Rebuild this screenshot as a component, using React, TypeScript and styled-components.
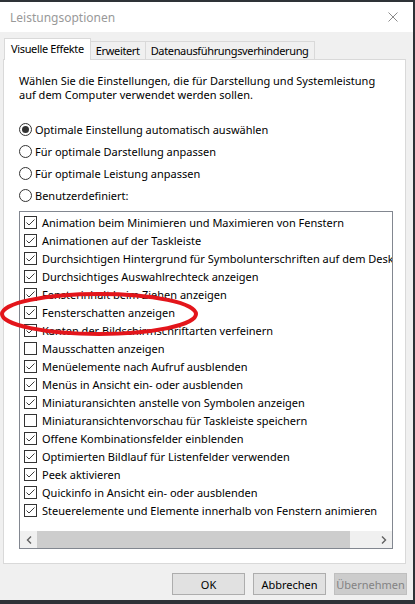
import React from "react";
import styled, { createGlobalStyle } from "styled-components";

const GlobalStyle = createGlobalStyle`
  html, body { margin: 0; padding: 0; }
  body {
    background: #2e3237;
    font-family: "Noto Sans", "Segoe UI", sans-serif;
    font-size: 11px;
    color: #000;
  }
  * { box-sizing: border-box; }
`;

const Window = styled.div`
  position: relative;
  width: 413px;
  height: 598px;
  margin-top: 2px;
  background: #f0f0f0;
  display: flex;
  flex-direction: column;
  overflow: hidden;
`;

const TitleBar = styled.div`
  height: 30px;
  background: #ffffff;
  display: flex;
  align-items: center;
  justify-content: space-between;
  padding: 0 15px 0 10px;
  flex-shrink: 0;
`;

const Title = styled.span`
  color: #999999;
  font-size: 12px;
`;

const TabRow = styled.div`
  display: flex;
  align-items: flex-end;
  height: 21px;
  margin: 6px 0 0 4px;
  position: relative;
  z-index: 1;
`;

const Tab = styled.div<{ $active?: boolean }>`
  height: ${(p) => (p.$active ? "22px" : "18px")};
  margin-bottom: ${(p) => (p.$active ? "-1px" : "0")};
  margin-left: ${(p) => (p.$active ? "0" : "-1px")};
  padding: 0 ${(p) => (p.$active ? "6px" : "5px")};
  background: ${(p) => (p.$active ? "#ffffff" : "#f0f0f0")};
  border: 1px solid #d9d9d9;
  border-bottom: none;
  display: flex;
  align-items: center;
  padding-bottom: ${(p) => (p.$active ? "3px" : "0")};
  white-space: nowrap;
  letter-spacing: -0.35px;
  &:first-child { margin-left: 0; }
`;

const Panel = styled.div`
  margin-left: 3px;
  width: 403px;
  height: 505px;
  background: #ffffff;
  border: 1px solid #d9d9d9;
  padding: 14px 0 0 15px;
  display: flex;
  flex-direction: column;
  flex-shrink: 0;
`;

const Intro = styled.p`
  margin: 0;
  line-height: 14px;
  width: 370px;
`;

const RadioGroup = styled.div`
  margin-top: 16px;
  display: flex;
  flex-direction: column;
`;

const RadioRow = styled.div`
  height: 22px;
  display: flex;
  align-items: center;
  gap: 3px;
`;

const RadioCircle = styled.span<{ $checked?: boolean }>`
  width: 13px;
  height: 13px;
  border-radius: 50%;
  border: 1px solid #333333;
  background: #ffffff;
  display: flex;
  align-items: center;
  justify-content: center;
  &::after {
    content: "";
    display: ${(p) => (p.$checked ? "block" : "none")};
    width: 7px;
    height: 7px;
    border-radius: 50%;
    background: #333333;
  }
`;

const ListBox = styled.div`
  margin-top: 5px;
  width: 374px;
  height: 338px;
  border: 1px solid #828790;
  display: flex;
  flex-direction: column;
  overflow: hidden;
`;

const Rows = styled.div`
  flex: 1;
  padding-top: 1px;
  overflow: hidden;
`;

const Row = styled.div`
  height: 18px;
  display: flex;
  align-items: center;
  padding-left: 4px;
  gap: 5px;
  white-space: nowrap;
`;

const CheckBox = styled.span`
  width: 13px;
  height: 13px;
  flex-shrink: 0;
  border: 1px solid #333333;
  background: #ffffff;
  display: flex;
  align-items: center;
  justify-content: center;
`;

const ScrollBar = styled.div`
  height: 17px;
  background: #f0f0f0;
  display: flex;
  align-items: stretch;
  flex-shrink: 0;
`;

const ScrollArrow = styled.div`
  width: 17px;
  display: flex;
  align-items: center;
  justify-content: center;
`;

const ScrollTrack = styled.div`
  flex: 1;
  display: flex;
  align-items: stretch;
  padding-right: 25px;
`;

const Thumb = styled.div`
  flex: 1;
  background: #cdcdcd;
`;

const ButtonRow = styled.div`
  margin-top: 9px;
  display: flex;
  justify-content: flex-end;
  gap: 8px;
  padding-right: 6px;
`;

const Button = styled.button<{ $disabled?: boolean }>`
  width: 73px;
  height: 22px;
  padding: 0;
  font-family: inherit;
  font-size: 11px;
  background: ${(p) => (p.$disabled ? "#cccccc" : "#e1e1e1")};
  border: 1px solid ${(p) => (p.$disabled ? "#bfbfbf" : "#adadad")};
  color: ${(p) => (p.$disabled ? "#838383" : "#000000")};
`;

const Annotation = styled.svg`
  position: absolute;
  left: 0;
  top: 0;
  pointer-events: none;
`;

const items: [string, boolean][] = [
  ["Animation beim Minimieren und Maximieren von Fenstern", true],
  ["Animationen auf der Taskleiste", true],
  ["Durchsichtigen Hintergrund für Symbolunterschriften auf dem Desktop", true],
  ["Durchsichtiges Auswahlrechteck anzeigen", true],
  ["Fensterinhalt beim Ziehen anzeigen", true],
  ["Fensterschatten anzeigen", true],
  ["Kanten der Bildschirmschriftarten verfeinern", true],
  ["Mausschatten anzeigen", false],
  ["Menüelemente nach Aufruf ausblenden", true],
  ["Menüs in Ansicht ein- oder ausblenden", true],
  ["Miniaturansichten anstelle von Symbolen anzeigen", true],
  ["Miniaturansichtenvorschau für Taskleiste speichern", false],
  ["Offene Kombinationsfelder einblenden", true],
  ["Optimierten Bildlauf für Listenfelder verwenden", true],
  ["Peek aktivieren", true],
  ["Quickinfo in Ansicht ein- oder ausblenden", true],
  ["Steuerelemente und Elemente innerhalb von Fenstern animieren", true],
];

const radios: [string, boolean][] = [
  ["Optimale Einstellung automatisch auswählen", true],
  ["Für optimale Darstellung anpassen", false],
  ["Für optimale Leistung anpassen", false],
  ["Benutzerdefiniert:", false],
];

const Check = () => (
  <svg width="11" height="11" viewBox="0 0 11 11">
    <path d="M1.5 5.5 L4 8 L9.5 2.5" fill="none" stroke="#3c3c3c" strokeWidth="1" />
  </svg>
);

export default function App() {
  return (
    <>
      <GlobalStyle />
      <Window>
        <TitleBar>
          <Title>Leistungsoptionen</Title>
          <svg width="10" height="10" viewBox="0 0 10 10">
            <path d="M0.5 0.5 L9.5 9.5 M9.5 0.5 L0.5 9.5" stroke="#8a8a8a" strokeWidth="1" />
          </svg>
        </TitleBar>
        <TabRow>
          <Tab $active>Visuelle Effekte</Tab>
          <Tab>Erweitert</Tab>
          <Tab>Datenausführungsverhinderung</Tab>
        </TabRow>
        <Panel>
          <Intro>
            Wählen Sie die Einstellungen, die für Darstellung und Systemleistung auf dem Computer verwendet werden sollen.
          </Intro>
          <RadioGroup>
            {radios.map(([label, checked]) => (
              <RadioRow key={label}>
                <RadioCircle $checked={checked} />
                {label}
              </RadioRow>
            ))}
          </RadioGroup>
          <ListBox>
            <Rows>
              {items.map(([label, checked]) => (
                <Row key={label}>
                  <CheckBox>{checked && <Check />}</CheckBox>
                  {label}
                </Row>
              ))}
            </Rows>
            <ScrollBar>
              <ScrollArrow>
                <svg width="6" height="8" viewBox="0 0 6 8">
                  <path d="M5 0.5 L1.5 4 L5 7.5" fill="none" stroke="#606060" strokeWidth="1.4" />
                </svg>
              </ScrollArrow>
              <ScrollTrack>
                <Thumb />
              </ScrollTrack>
              <ScrollArrow>
                <svg width="6" height="8" viewBox="0 0 6 8">
                  <path d="M1 0.5 L4.5 4 L1 7.5" fill="none" stroke="#606060" strokeWidth="1.4" />
                </svg>
              </ScrollArrow>
            </ScrollBar>
          </ListBox>
        </Panel>
        <ButtonRow>
          <Button>OK</Button>
          <Button>Abbrechen</Button>
          <Button $disabled>Übernehmen</Button>
        </ButtonRow>
        <Annotation width="413" height="598" viewBox="0 0 413 598">
          <ellipse cx="99" cy="312" rx="97" ry="20" fill="none" stroke="#e3151b" strokeWidth="4" />
        </Annotation>
      </Window>
    </>
  );
}
